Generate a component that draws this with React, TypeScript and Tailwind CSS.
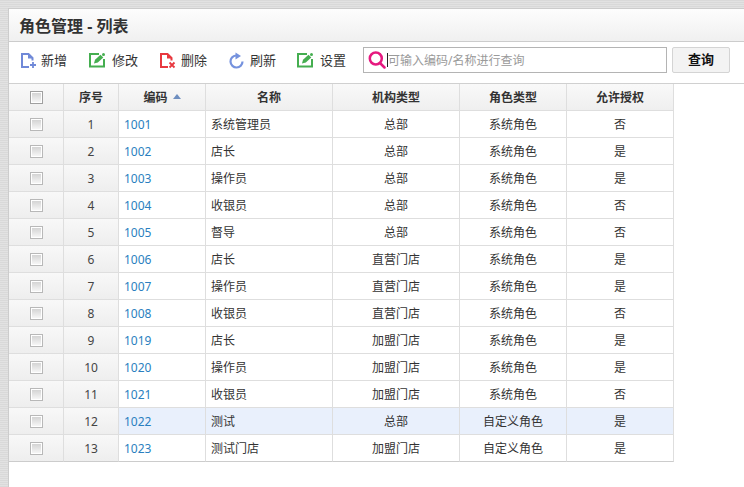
import { Fragment } from "react";

const rows = [
  [1, "1001", "系统管理员", "总部", "系统角色", "否"],
  [2, "1002", "店长", "总部", "系统角色", "是"],
  [3, "1003", "操作员", "总部", "系统角色", "是"],
  [4, "1004", "收银员", "总部", "系统角色", "否"],
  [5, "1005", "督导", "总部", "系统角色", "否"],
  [6, "1006", "店长", "直营门店", "系统角色", "是"],
  [7, "1007", "操作员", "直营门店", "系统角色", "是"],
  [8, "1008", "收银员", "直营门店", "系统角色", "否"],
  [9, "1019", "店长", "加盟门店", "系统角色", "是"],
  [10, "1020", "操作员", "加盟门店", "系统角色", "是"],
  [11, "1021", "收银员", "加盟门店", "系统角色", "否"],
  [12, "1022", "测试", "总部", "自定义角色", "是"],
  [13, "1023", "测试门店", "加盟门店", "自定义角色", "是"],
];

const AddIcon = () => (
  <svg width="16" height="18" viewBox="0 0 16 18" fill="none" stroke="#7089d8" strokeWidth="2">
    <path d="M8 16H1V3h6.500l4 4v2.500" />
    <path d="M7 2.500V7.500h5z" fill="#7089d8" stroke="none" />
    <path d="M12 11v6M9 14h6" strokeWidth="1.800" />
  </svg>
);

const DeleteIcon = () => (
  <svg width="16" height="18" viewBox="0 0 16 18" fill="none" stroke="#e8383f" strokeWidth="2">
    <path d="M8 16H1V3h6.500l4 4v2.500" />
    <path d="M7 2.500V7.500h5z" fill="#e8383f" stroke="none" />
    <path d="M9.500 11.500l5 5M14.500 11.500l-5 5" strokeWidth="1.800" />
  </svg>
);

const EditIcon = () => (
  <svg width="17" height="18" viewBox="0 0 17 18" fill="none" stroke="#45ae50" strokeWidth="2">
    <path d="M10 3H1v12.500h14V8" />
    <path d="M5 12.500l1-3.800 5.500-5 2.800 2.800-5.500 5z" fill="#45ae50" stroke="none" />
    <circle cx="14.500" cy="3.500" r="1.500" fill="#45ae50" stroke="none" />
  </svg>
);

const RefreshIcon = () => (
  <svg width="16" height="18" viewBox="0 0 16 18" fill="none" stroke="#7592de" strokeWidth="2.200">
    <path d="M7 4.500A6 6 0 1 0 13.500 10.500" />
    <path d="M6.500 1.500v7l5.500-3.500z" fill="#7592de" stroke="none" />
  </svg>
);

const SearchIcon = () => (
  <svg width="18" height="18" viewBox="0 0 18 18" fill="none" stroke="#e6197f" strokeWidth="2.500">
    <circle cx="7.800" cy="7.500" r="6" />
    <path d="M12 12l4.500 4.500" strokeLinecap="round" />
  </svg>
);

const Checkbox = ({ dark }: { dark?: boolean }) => (
  <span
    className={`mx-auto block h-[13px] w-[13px] border bg-white p-px ${dark ? "border-[#a0a0a0]" : "border-[#b8b8b8]"}`}
  >
    <span className="block h-full w-full bg-gradient-to-b from-[#d4d4d4] to-[#f6f6f6]" />
  </span>
);

function ToolButton({ icon, label, className }: { icon: React.ReactNode; label: string; className: string }) {
  return (
    <div className={`flex items-center ${className}`}>
      {icon}
      <span className="pt-[2px] text-[13px] text-[#333]">{label}</span>
    </div>
  );
}

const headCell = "border-r border-b border-[#dedede] bg-gradient-to-b from-[#f9f9f9] to-[#efefef] pt-px text-center font-bold text-[#333]";
const sideCell = "border-r border-b border-[#dedede] bg-gradient-to-b from-[#f8f8f8] to-[#eeeeee]";

export default function App() {
  return (
    <div
      className="h-[487px] w-[744px] overflow-hidden bg-[repeating-linear-gradient(0deg,#d9d9d9_0,#d9d9d9_1px,#e2e2e2_1px,#e2e2e2_2px)] pl-[8px] pt-[8px] text-xs"
      style={{ fontFamily: '"Noto Sans", "Noto Sans CJK SC", sans-serif' }}
    >
      <div className="h-full border-t border-l border-[#cccccc] bg-white">
        {/* Title */}
        <div className="flex h-[33px] items-center border-b border-[#cccccc] bg-gradient-to-b from-[#fdfdfd] to-[#f0f0f0] pl-[10px] pt-[2px]">
          <h1 className="text-base font-bold text-[#333]">角色管理 - 列表</h1>
        </div>

        {/* Toolbar */}
        <div className="flex h-[42px] items-start border-b border-[#d0d0d0] pl-[12px] pt-[5px]">
          <ToolButton icon={<AddIcon />} label="新增" className="h-[26px] w-[68px] gap-[4px]" />
          <ToolButton icon={<EditIcon />} label="修改" className="h-[26px] w-[71px] gap-[6px]" />
          <ToolButton icon={<DeleteIcon />} label="删除" className="h-[26px] w-[69px] gap-[5px]" />
          <ToolButton icon={<RefreshIcon />} label="刷新" className="h-[26px] w-[68px] gap-[5px]" />
          <ToolButton icon={<EditIcon />} label="设置" className="h-[26px] w-[66px] gap-[6px]" />
          <div className="flex h-[26px] w-[304px] items-center border border-[#b4b4b4] pl-[4px]">
            <SearchIcon />
            <span className="ml-px h-[14px] w-px bg-[#222]" />
            <span className="pt-px leading-none text-[#9a9a9a]">可输入编码/名称进行查询</span>
          </div>
          <button className="ml-[5px] h-[26px] w-[58px] rounded-[2px] border border-[#d4d4d4] bg-[#f3f3f3] text-[13px] font-bold text-[#111]">
            查询
          </button>
        </div>

        {/* Table */}
        <table className="table-fixed border-separate border-spacing-0 w-[665px]">
          <colgroup>
            <col className="w-[55px]" />
            <col className="w-[55px]" />
            <col className="w-[87px]" />
            <col className="w-[127px]" />
            <col className="w-[127px]" />
            <col className="w-[107px]" />
            <col className="w-[107px]" />
          </colgroup>
          <thead>
            <tr className="h-[27px]">
              <th className="border-r border-b border-[#dedede] bg-gradient-to-b from-[#f9f9f9] to-[#efefef]"><Checkbox dark /></th>
              <th className={headCell}>序号</th>
              <th className={headCell}>
                编码
                <span className="ml-[5px] inline-block border-x-[4px] border-b-[5px] border-x-transparent border-b-[#6f8fc0] align-[3px]" />
              </th>
              <th className={headCell}>名称</th>
              <th className={headCell}>机构类型</th>
              <th className={headCell}>角色类型</th>
              <th className={headCell}>允许授权</th>
            </tr>
          </thead>
          <tbody>
            {rows.map((r) => {
              const selected = r[0] === 12;
              const bg = selected ? "bg-[#e9f0fc]" : "";
              const line = r[0] === 13 ? "border-b-[#cccccc]" : "";
              const cell = `border-r border-b border-[#dedede] pt-[2px] ${line} ${bg}`;
              return (
                <Fragment key={r[0]}>
                  <tr className="h-[27px]">
                    <td className={`${sideCell} ${line}`}><Checkbox /></td>
                    <td className={`${sideCell} ${line} pt-[2px] text-center text-[#444]`}>{r[0]}</td>
                    <td className={`${cell} pl-[5px] text-[#2a7fc0]`}>{r[1]}</td>
                    <td className={`${cell} pl-[5px] text-[#333]`}>{r[2]}</td>
                    <td className={`${cell} text-center text-[#333]`}>{r[3]}</td>
                    <td className={`${cell} text-center text-[#333]`}>{r[4]}</td>
                    <td className={`${cell} text-center text-[#333]`}>{r[5]}</td>
                  </tr>
                </Fragment>
              );
            })}
          </tbody>
        </table>
      </div>
    </div>
  );
}
